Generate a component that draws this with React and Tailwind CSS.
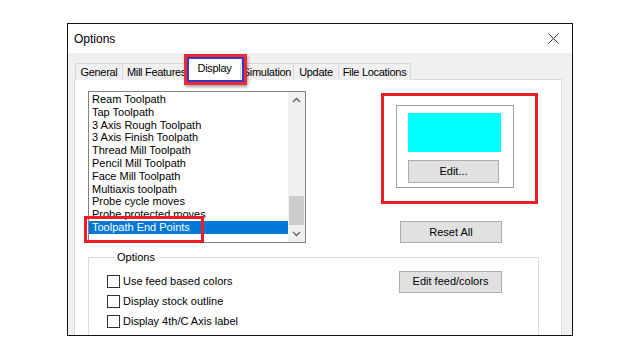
import React from 'react';

const items = [
  'Ream Toolpath',
  'Tap Toolpath',
  '3 Axis Rough Toolpath',
  '3 Axis Finish Toolpath',
  'Thread Mill Toolpath',
  'Pencil Mill Toolpath',
  'Face Mill Toolpath',
  'Multiaxis toolpath',
  'Probe cycle moves',
  'Probe protected moves',
  'Toolpath End Points',
];

const tabs = [
  { label: 'General', w: 'w-[48px]' },
  { label: 'Mill Features', w: 'w-[69px]' },
  { label: 'Display', w: 'w-[55px]', active: true },
  { label: 'Simulation', w: 'w-[54px]' },
  { label: 'Update', w: 'w-[46px]' },
  { label: 'File Locations', w: 'w-[73px]' },
];

const Checkbox = ({ label }) => (
  <div className="flex items-center h-[20px]">
    <div className="w-[13px] h-[13px] border border-[#333] bg-white" />
    <span className="ml-[3px]">{label}</span>
  </div>
);

const Button = ({ children, className }) => (
  <div className={`bg-[#e1e1e1] border border-[#adadad] flex items-center justify-center ${className}`}>
    {children}
  </div>
);

const App = () => {
  return (
    <div
      className="w-[640px] h-[360px] bg-white overflow-hidden pl-[67px] pt-[23px] text-[11px] text-black"
      style={{ fontFamily: '"Liberation Sans", Arial, sans-serif' }}
    >
      <div className="w-[506px] h-[313px] border border-[#111] flex flex-col overflow-hidden relative">
        {/* title bar */}
        <div className="h-[29px] bg-white flex items-center justify-between pl-[6px] pr-[13px] shrink-0">
          <span className="text-[12px]">Options</span>
          <svg width="11" height="11" viewBox="0 0 11 11">
            <path d="M0.5 0.5 L10.5 10.5 M10.5 0.5 L0.5 10.5" stroke="#333" strokeWidth="1" />
          </svg>
        </div>

        {/* body */}
        <div className="flex-1 bg-[#f0f0f0] pl-[6px] pr-[10px] pt-[5px] flex flex-col">
          {/* tabs */}
          <div className="flex items-end h-[22px] pl-[1px] relative z-10 tracking-[-0.3px]">
            {tabs.map((t) =>
              t.active ? (
                <div
                  key={t.label}
                  className={`${t.w} h-[22px] -ml-[4px] -mr-[1px] bg-white border border-[#d9d9d9] border-b-0 flex items-center justify-center pb-[3px] shrink-0`}
                >
                  {t.label}
                </div>
              ) : (
                <div
                  key={t.label}
                  className={`${t.w} h-[17px] bg-[#f0f0f0] border border-[#d9d9d9] border-b-0 -ml-px first:ml-0 flex items-center justify-center whitespace-nowrap shrink-0`}
                >
                  {t.label}
                </div>
              )
            )}
          </div>

          {/* panel */}
          <div className="flex-1 bg-white border border-[#d9d9d9] -mt-px pl-[13px] pt-[11px] pr-[22px]">
            <div className="flex">
              {/* listbox */}
              <div className="w-[218px] h-[152px] border border-[#828282] flex shrink-0">
                <div className="flex-1 pt-[1px]">
                  {items.map((it, i) => (
                    <div
                      key={it}
                      className={`h-[12.8px] leading-[12.8px] pl-[3px] whitespace-nowrap ${
                        i === items.length - 1 ? 'bg-[#0078d7] text-white h-[13px]' : ''
                      }`}
                    >
                      {it}
                    </div>
                  ))}
                </div>
                <div className="w-[17px] bg-[#f0f0f0] flex flex-col items-center">
                  <svg width="17" height="17" viewBox="0 0 17 17" className="shrink-0">
                    <path d="M5 10 L8.5 6.5 L12 10" fill="none" stroke="#606060" strokeWidth="1.3" />
                  </svg>
                  <div className="flex-1 w-full flex flex-col justify-end">
                    <div className="h-[29px] bg-[#cdcdcd] mx-[1px]" />
                  </div>
                  <svg width="17" height="17" viewBox="0 0 17 17" className="shrink-0">
                    <path d="M5 7 L8.5 10.5 L12 7" fill="none" stroke="#606060" strokeWidth="1.3" />
                  </svg>
                </div>
              </div>

              {/* right column */}
              <div className="ml-[75px] pt-[2px] flex flex-col">
                <div className="w-[157px] h-[111px] border-[3px] border-[#ec1c24] pl-[12px] pt-[9px]">
                  <div className="w-[118px] h-[83px] border border-[#a0a0a0] pl-[11px] pt-[7px]">
                    <div className="w-[93px] h-[39px] bg-[#00ffff]" />
                    <Button className="w-[91px] h-[23px] mt-[8px]">Edit...</Button>
                  </div>
                </div>
                <Button className="w-[102px] h-[22px] ml-[19px] mt-[17px]">Reset All</Button>
              </div>
            </div>

            {/* options group */}
            <fieldset className="w-[451px] h-[120px] mt-[6px] border border-[#dcdcdc] pl-[18px] pt-[6px] flex">
              <legend className="ml-[8px] px-[2px]">Options</legend>
              <div className="w-[292px]">
                <Checkbox label="Use feed based colors" />
                <Checkbox label="Display stock outline" />
                <Checkbox label="Display 4th/C Axis label" />
              </div>
              <Button className="w-[103px] h-[22px] -mt-[1px]">Edit feed/colors</Button>
            </fieldset>
          </div>
        </div>

        {/* annotation: Display tab */}
        <div className="absolute z-20 left-[116px] top-[30px] w-[63px] h-[31px] border-[3px] border-[#ee2a35] shadow-[1px_2px_3px_rgba(0,0,0,0.35)] pointer-events-none">
          <div className="w-full h-full border-2 border-[#3939c0]" />
        </div>
        {/* annotation: selected list item */}
        <div className="absolute z-20 left-[16px] top-[192px] w-[120px] h-[27px] border-[3px] border-[#ee1c25] pointer-events-none" />
      </div>
    </div>
  );
};

export default App;
